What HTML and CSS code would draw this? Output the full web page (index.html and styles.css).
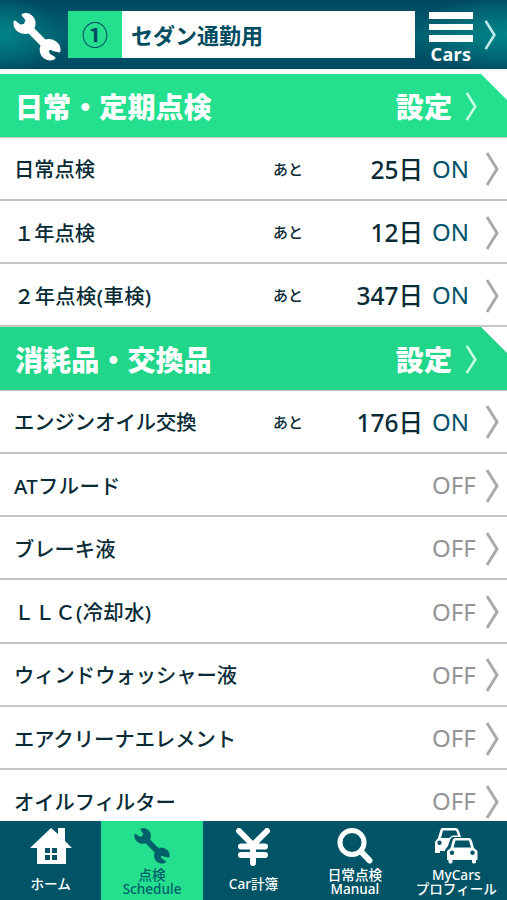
FILE: index.html
```html
<!DOCTYPE html>
<html lang="ja">
<head>
<meta charset="utf-8">
<title>点検 Schedule</title>
<link rel="stylesheet" href="styles.css">
</head>
<body>
<svg class="defs" aria-hidden="true">
  <symbol id="wrench" viewBox="0 0 48 48">
    <path d="M10 2C16 0 22 5 21 12L20 16L32 28C40 26 47 31 46 38L41 37L37 35L34 38L36 42L41 45C35 48 28 44 28 36L29 32L16 19C9 21 1 17 2 9L7 13L12 12L14 7Z" stroke-linejoin="round" stroke="currentColor" stroke-width="2.8"/>
  </symbol>
  <symbol id="chevron" viewBox="0 0 14 34"><path d="M2 1L12 17L2 33" fill="none" stroke="currentColor" stroke-width="3"/></symbol>
</svg>
<div class="app">
  <header class="top">
    <svg class="top-wrench"><use href="#wrench"/></svg>
    <div class="car"><span class="car-number">①</span><span class="car-name">セダン通勤用</span></div>
    <div class="menu"><i></i><i></i><i></i><span>Cars</span></div>
    <svg class="top-chevron"><use href="#chevron"/></svg>
  </header>
  <main>
    <h2 class="section"><span>日常・定期点検</span><b>設定</b><svg><use href="#chevron"/></svg></h2>
    <div class="row"><span class="label">日常点検</span><small>あと</small><span class="days">25日</span><span class="state on">ON</span><svg><use href="#chevron"/></svg></div>
    <div class="row"><span class="label">１年点検</span><small>あと</small><span class="days">12日</span><span class="state on">ON</span><svg><use href="#chevron"/></svg></div>
    <div class="row"><span class="label spaced">２年点検(車検)</span><small>あと</small><span class="days">347日</span><span class="state on">ON</span><svg><use href="#chevron"/></svg></div>
    <h2 class="section second"><span>消耗品・交換品</span><b>設定</b><svg><use href="#chevron"/></svg></h2>
    <div class="row"><span class="label">エンジンオイル交換</span><small>あと</small><span class="days">176日</span><span class="state on">ON</span><svg><use href="#chevron"/></svg></div>
    <div class="row"><span class="label spaced">ATフルード</span><span class="state">OFF</span><svg><use href="#chevron"/></svg></div>
    <div class="row"><span class="label">ブレーキ液</span><span class="state">OFF</span><svg><use href="#chevron"/></svg></div>
    <div class="row"><span class="label spaced">ＬＬＣ(冷却水)</span><span class="state">OFF</span><svg><use href="#chevron"/></svg></div>
    <div class="row"><span class="label">ウィンドウォッシャー液</span><span class="state">OFF</span><svg><use href="#chevron"/></svg></div>
    <div class="row"><span class="label">エアクリーナエレメント</span><span class="state">OFF</span><svg><use href="#chevron"/></svg></div>
    <div class="row"><span class="label">オイルフィルター</span><span class="state">OFF</span><svg><use href="#chevron"/></svg></div>
  </main>
  <nav>
    <a class="single"><svg viewBox="0 0 42 36"><path fill-rule="evenodd" d="M21 0L28 6V0H35V13L42 20H36V36H7V20H0ZM15 20V25H20V20ZM22 20V25H27V20ZM15 27V32H20V27ZM22 27V32H27V27Z"/></svg><span>ホーム</span></a>
    <a class="active"><svg viewBox="0 0 48 48"><use href="#wrench"/></svg><span>点検</span><span>Schedule</span></a>
    <a class="single"><svg class="yen" viewBox="0 0 36 38"><path fill="none" stroke="currentColor" stroke-width="6" stroke-linecap="round" stroke-linejoin="round" d="M4 3L18 17L32 3M18 17V35M6 18.5H30M6 27H30"/></svg><span>Car計簿</span></a>
    <a><svg viewBox="0 0 36 36"><circle cx="15" cy="14.5" r="12" fill="none" stroke="currentColor" stroke-width="5"/><path d="M24 23.5L32.5 32.5" stroke="currentColor" stroke-width="6" stroke-linecap="round"/></svg><span>日常点検</span><span>Manual</span></a>
    <a><svg class="cars" viewBox="0 0 44 36">
      <path fill-rule="evenodd" d="M8 0H22Q24 0 25 3L27 9H19Q17 9 16 12L14 18L11 22V23H6V25H1V14L4 10L6 3Q7 0 8 0ZM9 2.5L7 10H15.5Q17 7.500 19 7.500H24L22 2.500ZM5.500 12.500A2.200 2.200 0 1 0 5.500 16.900A2.200 2.200 0 1 0 5.500 12.500Z"/>
      <path fill-rule="evenodd" d="M21 10H35Q37 10 38 13L40 20L43.500 23V32H42V34Q42 35.500 40 35.500Q38 35.500 38 34V32H18.500V34Q18.500 35.500 16.500 35.500Q14.500 35.500 14.500 34V32H13V23L16.500 20L18.500 13Q19 10 21 10ZM21.500 12.500L19.500 19.500H37L35 12.500ZM18 22.500A2.200 2.200 0 1 0 18 26.900A2.200 2.200 0 1 0 18 22.500ZM38.500 22.500A2.200 2.200 0 1 0 38.500 26.900A2.200 2.200 0 1 0 38.500 22.500Z"/>
    </svg><span>MyCars</span><span>プロフィール</span></a>
  </nav>
</div>
</body>
</html>
```
FILE: styles.css
```css
* { box-sizing: border-box; }
body { margin: 0; font-family: "Noto Sans", "Noto Sans CJK JP", sans-serif; background: #fff; }
svg { display: block; fill: currentColor; flex: none; }
.defs { display: none; }
.app { width: 507px; height: 900px; display: flex; flex-direction: column; overflow: hidden; }
.top { flex: none; height: 69px; display: flex; align-items: flex-start; color: #fff; background: radial-gradient(ellipse 62px 40px at 0 50%, #008489, transparent), radial-gradient(ellipse 90px 40px at 100% 50%, #008489, transparent), linear-gradient(#004862, #006270 50%, #004862); }
.top-wrench { width: 48px; height: 48px; margin: 13px 7px 0 13px; }
.car { display: flex; width: 347px; height: 47px; margin-top: 11px; background: #fff; color: #004c60; font-weight: 700; font-size: 22px; line-height: 48px; }
.car-number { width: 54px; background: #23df8e; text-align: center; font-size: 26px; font-weight: 700; line-height: 48px; }
.car-name { padding-left: 9px; }
.menu { width: 44px; margin: 12px 0 0 14px; display: flex; flex-direction: column; gap: 5px; align-items: center; }
.menu i { width: 44px; height: 6.5px; background: #fff; }
.menu span { font-size: 18px; font-weight: 700; line-height: 20px; margin-top: -3px; letter-spacing: .4px; }
.top-chevron { width: 14px; height: 30px; margin: 20px 0 0 10px; color: #bce9ea; }
main { flex: none; height: 752px; padding-top: 5.4px; overflow: hidden; }
.section, .row { height: 63.25px; display: flex; align-items: center; margin: 0; white-space: nowrap; border-bottom: 2px solid #c5c5c5; }
.section { background: linear-gradient(225deg, #fff 18px, #23df8e 18.7px); color: #fff; font-size: 28.1px; line-height: 36px; font-weight: 900; padding: 2px 29px 0 15px; border-bottom-width: 1px; }
.section.second { background: linear-gradient(225deg, #fff 18px, #21d589 18.7px); }
.section b { margin-left: auto; font-weight: 900; }
.section svg { width: 14px; height: 29px; margin-left: 12px; color: #c9ffe6; }
.row { color: #082b36; padding: 0 8px 0 14px; font-size: 20.3px; font-weight: 500; }
.label { width: 259px; }
.spaced { letter-spacing: .4px; }
.row small { width: 40px; font-size: 15px; }
.days { width: 110px; text-align: right; font-size: 24.5px; font-weight: 500; }
.state { margin-left: auto; width: 53px; color: #959595; font-size: 24px; font-weight: 400; }
.state.on { color: #00536a; }
.row svg { width: 14px; height: 34px; margin-top: 2px; color: #aaa; }
nav { flex: none; height: 79px; display: grid; grid-template-columns: repeat(5, 1fr); background: #005466; color: #fff; }
nav a { display: flex; flex-direction: column; align-items: center; padding-top: 7px; font-size: 13.6px; line-height: 14px; font-weight: 500; white-space: nowrap; }
nav svg { width: 36px; height: 36px; margin-bottom: 4px; }
.single svg { width: 42px; margin-bottom: 13px; }
.single .yen { width: 36px; height: 38px; margin-bottom: 11px; }
nav .cars { width: 44px; }
.active { background: #23df8e; color: #00616a; }
```
